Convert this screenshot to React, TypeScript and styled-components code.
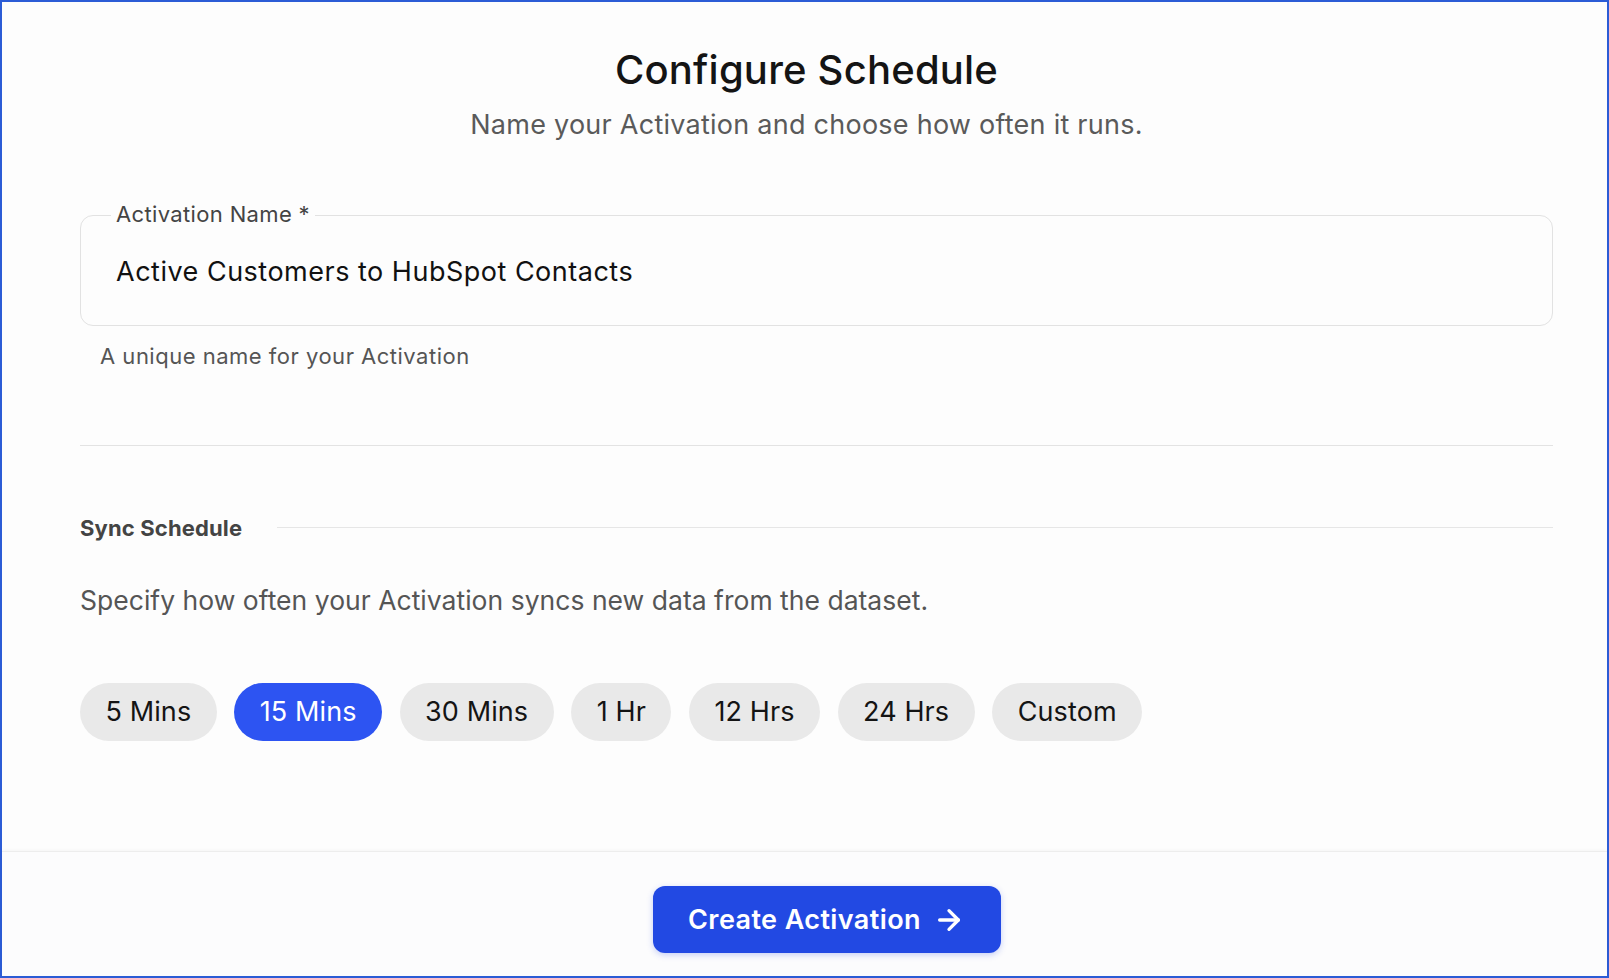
import React, { useState } from "react";
import styled, { createGlobalStyle } from "styled-components";
import { ArrowRight } from "lucide-react";

const GlobalStyle = createGlobalStyle`
  * { box-sizing: border-box; }
  html, body { margin: 0; padding: 0; background: #fdfdfd; }
  body { font-family: Inter, "Noto Sans", "Liberation Sans", sans-serif; -webkit-font-smoothing: antialiased; }
`;

const Frame = styled.div`
  width: 1609px;
  height: 978px;
  border: 2px solid #2c5cd6;
  background: #fdfdfd;
  display: flex;
  flex-direction: column;
`;

const Header = styled.header`
  padding: 43.5px 0 0 4px;
  display: flex;
  flex-direction: column;
  align-items: center;
`;

const Main = styled.main`
  flex: 1;
  display: flex;
  flex-direction: column;
  padding: 0 54px 0 78px;
`;

const Title = styled.h1`
  margin: 0;
  text-align: center;
  font-size: 40px;
  line-height: 48px;
  font-weight: 500;
  color: #141414;
  letter-spacing: 0.2px;
`;

const Subtitle = styled.p`
  margin: 15px 0 0;
  text-align: center;
  font-size: 27px;
  line-height: 32px;
  font-weight: 400;
  color: #5a5a5a;
  letter-spacing: 0.25px;
`;

const Field = styled.div`
  position: relative;
  margin-top: 74.5px;
  height: 111px;
  border: 1px solid #e2e2e2;
  border-radius: 13px;
  padding: 41px 30px 37px 35px;
  background: #fdfdfd;
`;

const FieldLabel = styled.label`
  position: absolute;
  top: -14px;
  left: 30px;
  padding: 0 5px;
  background: #fdfdfd;
  font-size: 22px;
  line-height: 24px;
  color: #444;
  letter-spacing: 0.35px;
`;

const FieldValue = styled.div`
  font-size: 27px;
  line-height: 30px;
  color: #111;
  letter-spacing: 0.5px;
`;

const Helper = styled.p`
  margin: 16.5px 0 0 20px;
  font-size: 22px;
  line-height: 26px;
  color: #555;
  letter-spacing: 0.5px;
`;

const Divider = styled.hr`
  margin: 76px 0 0;
  border: 0;
  height: 1px;
  background: #e3e3e3;
`;

const SectionRow = styled.div`
  margin-top: 69px;
  display: flex;
  align-items: center;
  gap: 35px;
`;

const SectionTitle = styled.h2`
  margin: 0;
  font-size: 22px;
  line-height: 26px;
  font-weight: 700;
  color: #444;
  white-space: nowrap;
  letter-spacing: 0.15px;
`;

const SectionLine = styled.div`
  flex: 1;
  height: 1px;
  background: #e6e6e6;
`;

const SectionText = styled.p`
  margin: 43px 0 0;
  font-size: 26.5px;
  line-height: 32px;
  color: #555;
  letter-spacing: 0.02px;
`;

const Pills = styled.div`
  margin-top: 67px;
  display: flex;
  gap: 17.5px;
`;

const Pill = styled.button<{ $active?: boolean }>`
  height: 58px;
  padding: 0 25.5px;
  border: 0;
  border-radius: 29px;
  font-family: inherit;
  font-size: 27px;
  font-weight: 400;
  letter-spacing: 0.1px;
  color: ${(p) => (p.$active ? "#ffffff" : "#141414")};
  background: ${(p) => (p.$active ? "#2d54f2" : "#e9e9e9")};
  cursor: pointer;
`;

const Footer = styled.footer`
  height: 125px;
  border-top: 1px solid #ededed;
  box-shadow: 0 -1px 3px rgba(0, 0, 0, 0.03);
  background: #fcfcfd;
  display: flex;
  justify-content: center;
  align-items: flex-start;
  padding: 34px 0 0 44px;
`;

const PrimaryButton = styled.button`
  width: 348px;
  height: 67px;
  border: 0;
  border-radius: 12px;
  background: #2249e3;
  color: #fff;
  font-family: inherit;
  font-size: 27px;
  font-weight: 600;
  letter-spacing: 0.4px;
  display: flex;
  align-items: center;
  justify-content: center;
  gap: 12px;
  box-shadow: 0 2px 6px rgba(34, 73, 227, 0.25);
  cursor: pointer;
`;

const options = ["5 Mins", "15 Mins", "30 Mins", "1 Hr", "12 Hrs", "24 Hrs", "Custom"];

export default function App() {
  const [selected, setSelected] = useState("15 Mins");
  return (
    <>
      <GlobalStyle />
      <Frame>
        <Header>
          <Title>Configure Schedule</Title>
          <Subtitle>Name your Activation and choose how often it runs.</Subtitle>
        </Header>
        <Main>
          <Field>
            <FieldLabel>Activation Name *</FieldLabel>
            <FieldValue>Active Customers to HubSpot Contacts</FieldValue>
          </Field>
          <Helper>A unique name for your Activation</Helper>
          <Divider />
          <SectionRow>
            <SectionTitle>Sync Schedule</SectionTitle>
            <SectionLine />
          </SectionRow>
          <SectionText>Specify how often your Activation syncs new data from the dataset.</SectionText>
          <Pills>
            {options.map((o) => (
              <Pill key={o} $active={o === selected} onClick={() => setSelected(o)}>
                {o}
              </Pill>
            ))}
          </Pills>
        </Main>
        <Footer>
          <PrimaryButton>
            Create Activation
            <ArrowRight size={32} strokeWidth={2.5} />
          </PrimaryButton>
        </Footer>
      </Frame>
    </>
  );
}
